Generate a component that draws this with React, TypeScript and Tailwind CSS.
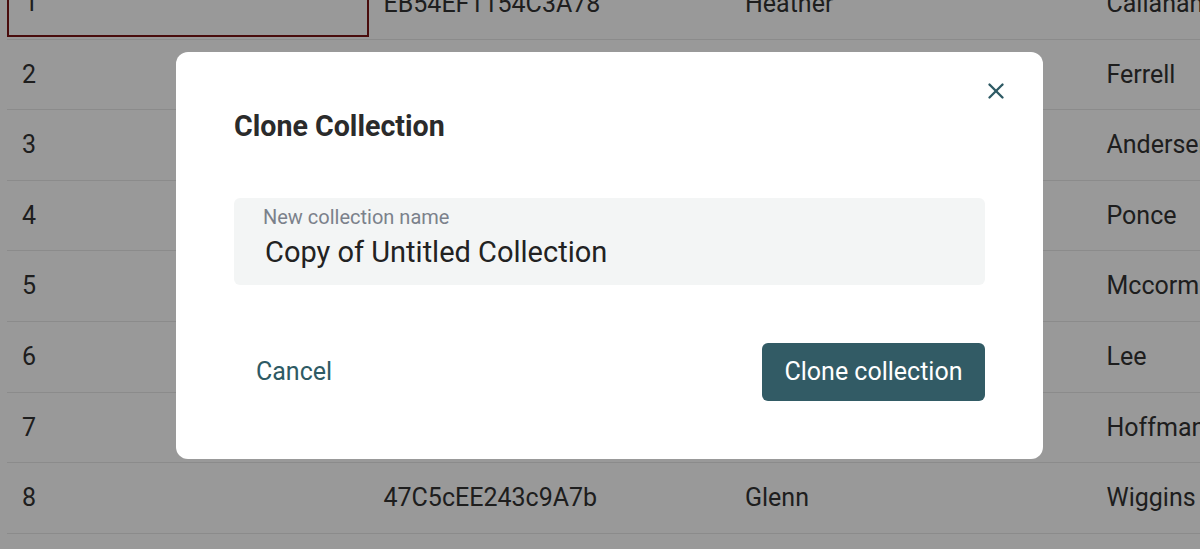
import { X } from "lucide-react";

const rows = [
  ["1", "EB54EF1154C3A78", "Heather", "Callahan"],
  ["2", "8aF3c1D9e05B7c2", "Marcus", "Ferrell"],
  ["3", "C91bE7a2F40d6E3", "Lydia", "Andersen"],
  ["4", "5dA0fB83c7E2e91", "Oscar", "Ponce"],
  ["5", "F2e6C4a9B18d0A5", "Renee", "Mccormick"],
  ["6", "03bD7eA5c9F1E48", "Tony", "Lee"],
  ["7", "A7c2E0f6D93b1C4", "Nadia", "Hoffman"],
  ["8", "47C5cEE243c9A7b", "Glenn", "Wiggins"],
];

export default function App() {
  return (
    <div
      className="relative w-[1200px] h-[549px] overflow-hidden bg-white"
      style={{ fontFamily: "Roboto, 'Liberation Sans', sans-serif" }}
    >
      {/* table behind the dialog */}
      <div className="mt-[-31px] pl-[7px]">
        {rows.map((r, i) => (
          <div
            key={r[0]}
            className="flex h-[70.6px] border-b border-[#e8e8e8] text-[25px] text-[#333]"
          >
            {r.map((c, j) => (
              <div
                key={j}
                className={
                  "w-[361.5px] shrink-0 flex items-center pl-[15px] whitespace-nowrap " +
                  (i === 0 && j === 0 ? "border-2 border-[#7a1414] mb-[2px]" : "")
                }
              >
                {c}
              </div>
            ))}
          </div>
        ))}
      </div>

      {/* overlay */}
      <div className="absolute inset-0 bg-black/40" />

      {/* dialog */}
      <div className="absolute left-[176px] top-[52px] w-[867px] h-[407px] bg-white rounded-[12px] px-[58px] pt-[56px]">
        <button className="absolute right-[34px] top-[26px] text-[#2e5a64]">
          <X size={26} strokeWidth={2.2} />
        </button>
        <h2 className="text-[28.6px] font-bold text-[#2b2b2b] leading-[36px]">
          Clone Collection
        </h2>
        <div className="mt-[54px] h-[87px] bg-[#f3f5f5] rounded-[6px] pl-[29px] pt-[7px]">
          <div className="text-[20px] text-[#7b818b] leading-[24px]">
            New collection name
          </div>
          <div className="text-[29px] text-[#222] leading-[46px] pl-[2px]">
            Copy of Untitled Collection
          </div>
        </div>
        <div className="mt-[58px] flex items-center justify-between">
          <button className="ml-[22px] text-[25px] text-[#2e5a64]">Cancel</button>
          <button className="w-[223px] h-[58px] rounded-[6px] bg-[#325b65] text-white text-[25px]">
            Clone collection
          </button>
        </div>
      </div>
    </div>
  );
}
